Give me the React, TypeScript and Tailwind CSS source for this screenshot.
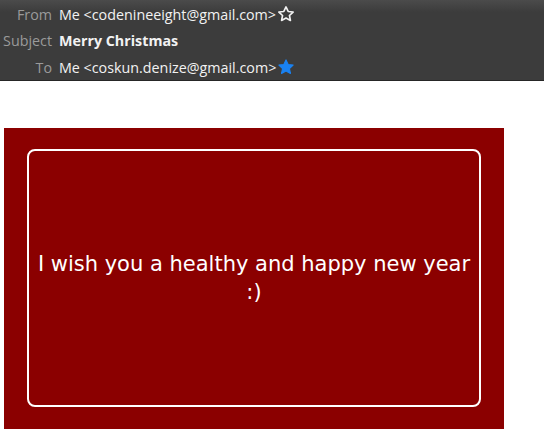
export default function App() {
  const rows = [
    { label: "From", value: "Me <codenineeight@gmail.com>", star: "outline" },
    { label: "Subject", value: "Merry Christmas", bold: true },
    { label: "To", value: "Me <coskun.denize@gmail.com>", star: "filled" },
  ];
  return (
    <div className="w-[544px] h-[444px] bg-white" style={{ fontFamily: "'Open Sans', sans-serif" }}>
      <div className="h-[81px] bg-[linear-gradient(#4b4b4b,#3c3c3c_12px)] border-b border-[#262626] pt-[1px]">
        {rows.map((r) => (
          <div key={r.label} className="flex items-center h-[26.5px] text-[14.3px]">
            <div className="w-[52px] text-right text-[#9a9a9a] whitespace-nowrap">{r.label}</div>
            <div className={`ml-[7px] text-[#f2f2f2] ${r.bold ? "font-bold" : ""}`}>{r.value}</div>
            {r.star === "outline" && (
              <svg width="18" height="18" viewBox="0 0 24 24" className="ml-[1px]">
                <path d="M12 2.5l2.9 6.1 6.6.8-4.9 4.6 1.3 6.6L12 17.3l-5.9 3.3 1.3-6.6-4.9-4.6 6.6-.8z" fill="none" stroke="#f2f2f2" strokeWidth="2.2" strokeLinejoin="round" />
              </svg>
            )}
            {r.star === "filled" && (
              <svg width="18" height="18" viewBox="0 0 24 24" className="ml-[1px]">
                <path d="M12 2.5l2.9 6.1 6.6.8-4.9 4.6 1.3 6.6L12 17.3l-5.9 3.3 1.3-6.6-4.9-4.6 6.6-.8z" fill="#1a82f2" stroke="#1a82f2" strokeWidth="1.5" strokeLinejoin="round" />
              </svg>
            )}
          </div>
        ))}
      </div>
      <div className="ml-[4px] mt-[47px] w-[500px] h-[301px] bg-[#8b0000] px-[23px] pt-[21px] pb-[22px]">
        <div className="h-full border-2 border-white rounded-[8px] flex items-center justify-center px-[8px]">
          <p className="text-white text-[21px] leading-[28px] text-center" style={{ fontFamily: "'DejaVu Sans', sans-serif" }}>
            I wish you a healthy and happy new year :)
          </p>
        </div>
      </div>
    </div>
  );
}
